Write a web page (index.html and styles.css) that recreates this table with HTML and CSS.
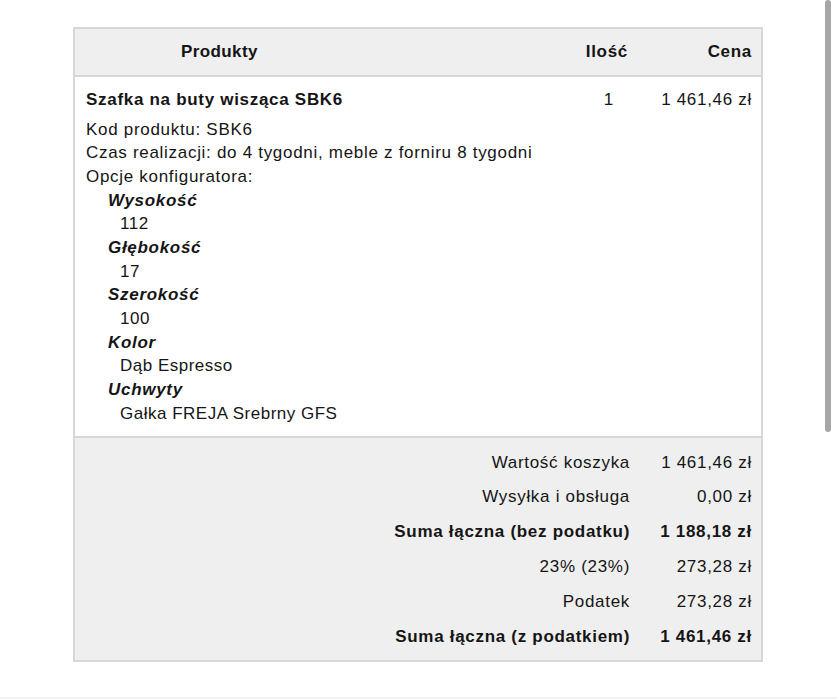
FILE: index.html
```html
<!DOCTYPE html>
<html lang="pl">
<head>
<meta charset="utf-8">
<title>Koszyk</title>
<link rel="stylesheet" href="styles.css">
</head>
<body>
<div class="page">
  <div class="cart">
    <div class="row head">
      <div class="c-prod head-prod">Produkty</div>
      <div class="c-qty">Ilość</div>
      <div class="c-price">Cena</div>
    </div>
    <div class="row item">
      <div class="c-prod">
        <div class="name">Szafka na buty wisząca SBK6</div>
        <div class="line">Kod produktu: SBK6</div>
        <div class="line">Czas realizacji: do 4 tygodni, meble z forniru 8 tygodni</div>
        <div class="line">Opcje konfiguratora:</div>
        <dl class="opts">
          <dt>Wysokość</dt><dd>112</dd>
          <dt>Głębokość</dt><dd>17</dd>
          <dt>Szerokość</dt><dd>100</dd>
          <dt>Kolor</dt><dd>Dąb Espresso</dd>
          <dt>Uchwyty</dt><dd>Gałka FREJA Srebrny GFS</dd>
        </dl>
      </div>
      <div class="c-qty qty-val">1</div>
      <div class="c-price price-val">1 461,46 zł</div>
    </div>
    <div class="totals">
      <div class="t-label">Wartość koszyka</div><div class="t-val">1 461,46 zł</div>
      <div class="t-label">Wysyłka i obsługa</div><div class="t-val">0,00 zł</div>
      <div class="t-label strong">Suma łączna (bez podatku)</div><div class="t-val strong">1 188,18 zł</div>
      <div class="t-label">23% (23%)</div><div class="t-val">273,28 zł</div>
      <div class="t-label">Podatek</div><div class="t-val">273,28 zł</div>
      <div class="t-label strong">Suma łączna (z podatkiem)</div><div class="t-val strong">1 461,46 zł</div>
    </div>
  </div>
  <div class="footer-strip"></div>
</div>
<div class="scrollbar"></div>
</body>
</html>
```

FILE: styles.css
```css
html, body {
  margin: 0;
  padding: 0;
  background: #ffffff;
}
body {
  font-family: "Liberation Sans", Arial, Helvetica, sans-serif;
  font-size: 17px;
  letter-spacing: 0.7px;
  color: #151515;
  overflow: hidden;
}
.page {
  padding-top: 27px;
}
.cart {
  margin-left: 73px;
  width: 686px;
  border: 2px solid #d7d7d7;
}
.row {
  display: grid;
  grid-template-columns: 1fr 74px 122px;
}
.head {
  background: #efefef;
  height: 46px;
  align-items: center;
  border-bottom: 2px solid #d7d7d7;
  font-weight: bold;
}
.head-prod {
  padding-left: 106px;
  letter-spacing: 0.4px;
}
.c-qty {
  text-align: right;
  padding-right: 11px;
}
.c-price {
  text-align: right;
  padding-right: 9px;
}
.item {
  background: #ffffff;
  border-bottom: 2px solid #d7d7d7;
  padding: 11px 0 11px;
  line-height: 23.65px;
  align-items: start;
}
.item .c-prod {
  padding-left: 11px;
}
.name {
  font-weight: bold;
  margin-bottom: 6px;
}
.opts {
  margin: 0;
  padding: 0;
}
.opts dt {
  font-weight: bold;
  font-style: italic;
  padding-left: 22px;
}
.opts dd {
  margin: 0;
  padding-left: 34px;
  letter-spacing: 0.5px;
}
.qty-val {
  padding-right: 25px;
}
.totals {
  background: #efefef;
  display: grid;
  grid-template-columns: 1fr 122px;
  grid-auto-rows: 34.8px;
  align-items: center;
  padding: 7px 0 6px;
}
.t-label {
  text-align: right;
  padding-right: 9px;
}
.t-val {
  text-align: right;
  padding-right: 9px;
}
.strong {
  font-weight: bold;
}
.footer-strip {
  margin-top: 35px;
  height: 10px;
  background: #f3f3f3;
}
.scrollbar {
  position: fixed;
  top: 0;
  right: 6px;
  width: 6px;
  height: 432px;
  border-radius: 3px;
  background: #a7a7a7;
}
```
